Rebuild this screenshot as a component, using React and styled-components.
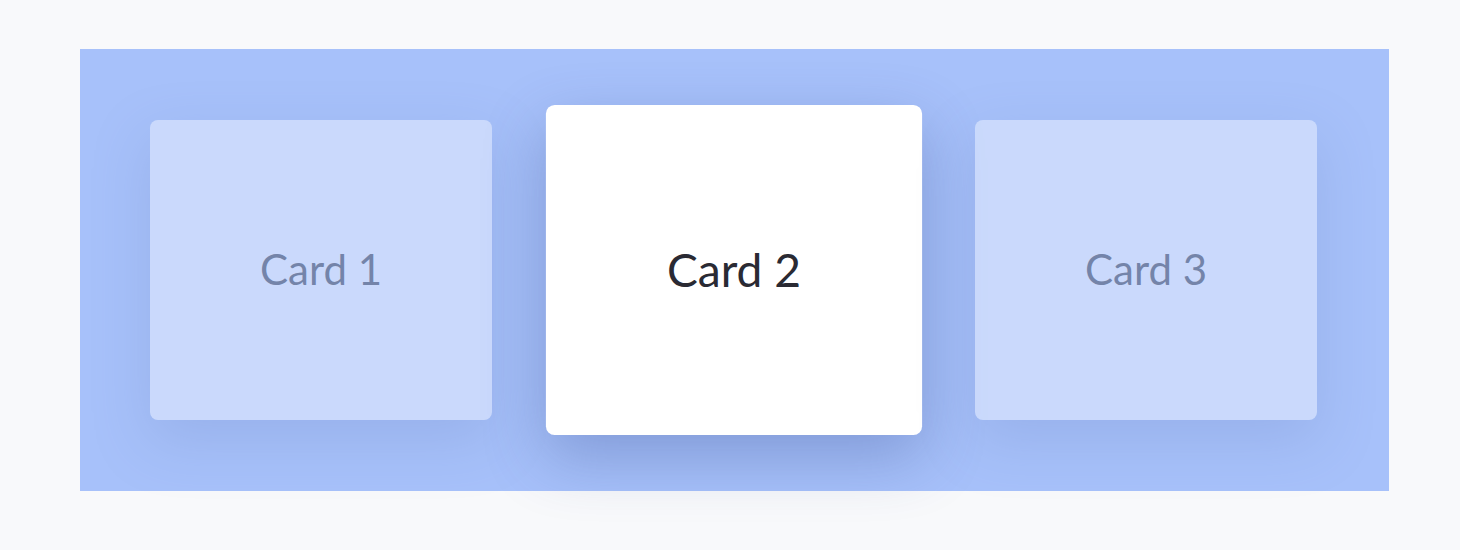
import React, { useState } from "react";
import styled, { createGlobalStyle } from "styled-components";

const GlobalStyle = createGlobalStyle`
  html, body {
    margin: 0;
    padding: 0;
    background: #f8f9fb;
    font-family: Lato, "Open Sans", sans-serif;
  }
`;

const Page = styled.div`
  width: 1460px;
  height: 550px;
  padding-top: 49px;
  box-sizing: border-box;
`;

const Track = styled.div`
  width: 1309px;
  height: 442px;
  margin-left: 80px;
  padding: 0 70px;
  box-sizing: border-box;
  background: #a7c1fa;
  display: flex;
  align-items: center;
  gap: 70.5px;
`;

const Card = styled.div`
  width: 342px;
  height: 300px;
  flex-shrink: 0;
  border-radius: 8px;
  background: #ffffff;
  display: flex;
  align-items: center;
  justify-content: center;
  padding-bottom: 2px;
  box-sizing: border-box;
  font-size: 42px;
  color: #2a2a33;
  cursor: pointer;
  opacity: ${(p) => (p.$active ? 1 : 0.4)};
  transform: scale(${(p) => (p.$active ? 1.1 : 1)});
  box-shadow: 0 20px 56px rgba(50, 70, 140, 0.32);
  transition: transform 0.3s ease, opacity 0.3s ease;
`;

const App = () => {
  const [active, setActive] = useState(1);
  const cards = ["Card 1", "Card 2", "Card 3"];

  return (
    <Page>
      <GlobalStyle />
      <Track>
        {cards.map((label, i) => (
          <Card key={label} $active={i === active} onClick={() => setActive(i)}>
            {label}
          </Card>
        ))}
      </Track>
    </Page>
  );
};

export default App;
